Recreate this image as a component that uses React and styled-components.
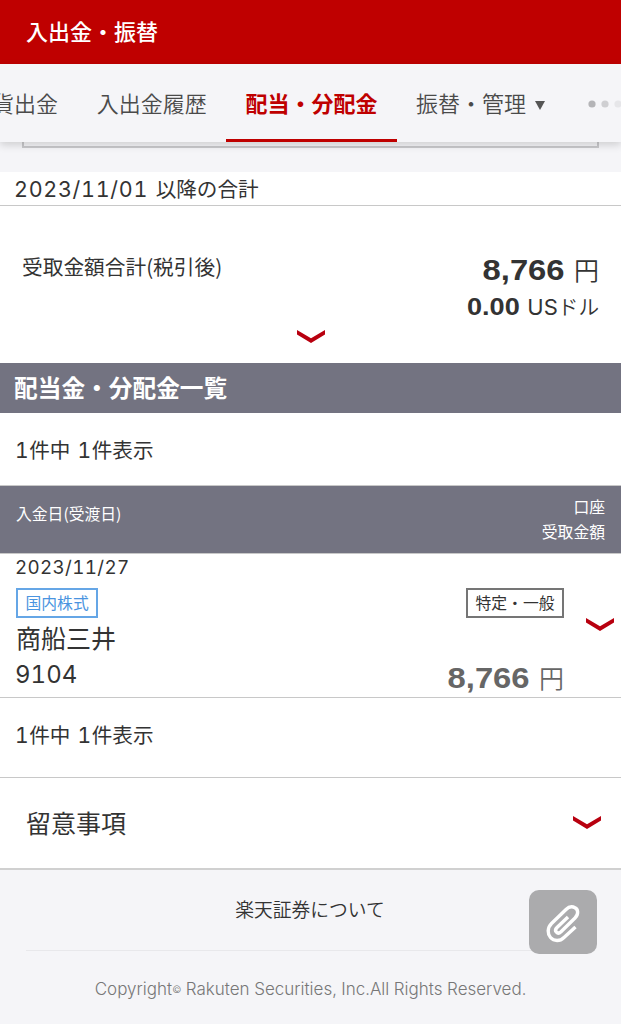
import React, { useState } from 'react';
import styled, { createGlobalStyle } from 'styled-components';

const GlobalStyle = createGlobalStyle`
  * {
    box-sizing: border-box;
  }

  body {
    margin: 0;
    background: #fff;
    color: #333;
    font-family: 'Noto Sans CJK JP', sans-serif;
    overflow: hidden;
  }
`;

const Page = styled.div`
  display: flex;
  flex-direction: column;
  width: 621px;
  height: 1024px;
  overflow: hidden;
`;

const Header = styled.header`
  flex-shrink: 0;
  height: 64px;
  padding-left: 26px;
  background: #bf0000;
  color: #fff;
  font-size: 22px;
  font-weight: 500;
  line-height: 61px;
`;

const TabBar = styled.nav`
  display: flex;
  flex-shrink: 0;
  height: 78px;
  background: #f5f5f8;
  box-shadow: 0 3px 8px rgba(0, 0, 0, 0.16);
  z-index: 1;
`;

const Tab = styled.button`
  flex-shrink: 0;
  height: 78px;
  margin: 0;
  padding: 0 19.3px 0 19.4px;
  border: none;
  border-bottom: 3px solid ${({ $active }) => ($active ? '#bf0000' : 'transparent')};
  background: none;
  color: ${({ $active }) => ($active ? '#bf0000' : '#4a4a4a')};
  font-family: inherit;
  font-size: 22px;
  font-weight: ${({ $active }) => ($active ? 700 : 350)};
  line-height: 76px;
  white-space: nowrap;
  cursor: pointer;

  &:first-child {
    margin-left: -27.4px;
  }
`;

const Caret = styled.svg`
  width: 10px;
  height: 10px;
  margin-left: 9px;
  vertical-align: 2px;
`;

const More = styled.svg`
  flex-shrink: 0;
  width: 40px;
  height: 10px;
  margin: 35px 0 0 23px;
`;

const FilterArea = styled.div`
  flex-shrink: 0;
  height: 30px;
  padding: 0 22px;
  background: #f5f5f8;
`;

const FilterBox = styled.div`
  height: 6px;
  border: 2px solid #c9c9cc;
  border-top: none;
`;

const Latin = styled.span`
  font-family: Inter, 'Noto Sans CJK JP', sans-serif;
  font-size: ${({ $size }) => $size}px;
  font-weight: ${({ $weight }) => $weight || 400};
  font-variant-numeric: tabular-nums;
  letter-spacing: ${({ $spacing }) => $spacing || 0}px;
  line-height: 1;
`;

/* wide bold figures, stretched towards the left of their right edge */
const Figure = styled.span`
  display: inline-block;
  font-family: 'Liberation Sans', Arial, sans-serif;
  font-size: ${({ $size }) => $size}px;
  font-weight: 700;
  line-height: 1;
  transform: scaleX(1.13);
  transform-origin: right center;
`;

const Since = styled.div`
  flex-shrink: 0;
  height: 34px;
  padding-left: 14px;
  border-bottom: 1px solid #c8c8c8;
  font-size: 20.6px;
  line-height: 33px;
  white-space: pre;
  word-spacing: 3px;
`;

const Summary = styled.section`
  display: flex;
  flex-direction: column;
  align-items: center;
  flex-shrink: 0;
  height: 157px;
  padding: 45px 22px 0;
`;

const SummaryRow = styled.div`
  display: flex;
  justify-content: space-between;
  width: 100%;
  height: 79px;
`;

const SummaryLabel = styled.div`
  font-size: 20.7px;
  line-height: 30px;
`;

const Amounts = styled.div`
  display: flex;
  flex-direction: column;
  align-items: flex-end;
`;

const Amount = styled.div`
  display: flex;
  align-items: baseline;
  gap: ${({ $gap }) => $gap}px;
  color: ${({ $muted }) => ($muted ? '#666' : '#333')};
  font-size: ${({ $size }) => $size}px;
  font-weight: 350;
  line-height: ${({ $line }) => $line || 37}px;
`;

const ToggleButton = styled.button`
  display: flex;
  padding: 0;
  border: none;
  background: none;
  cursor: pointer;
`;

const SectionTitle = styled.h2`
  flex-shrink: 0;
  height: 50px;
  margin: 0;
  padding-left: 14px;
  background: #737381;
  color: #fff;
  font-size: 23.7px;
  font-weight: 700;
  line-height: 48px;
`;

const Count = styled.div`
  flex-shrink: 0;
  height: ${({ $height }) => $height}px;
  padding-left: 15px;
  border-bottom: 1px solid #c8c8c8;
  font-size: 20.6px;
  line-height: ${({ $line }) => $line}px;
  white-space: pre;
  word-spacing: 2.5px;
`;

const TableHead = styled.div`
  display: flex;
  justify-content: space-between;
  flex-shrink: 0;
  height: 68px;
  padding: 8px 16px 0 16px;
  border-bottom: 1px solid #c8c8c8;
  background: #737381;
  color: #fff;
  font-size: 15.8px;
  line-height: 25px;
`;

const HeadLeft = styled.div`
  padding-top: 7px;
`;

const HeadRight = styled.div`
  text-align: right;
`;

const Item = styled.div`
  display: flex;
  flex-shrink: 0;
  height: 144px;
  padding-left: 16px;
  border-bottom: 1px solid #c8c8c8;
`;

const ItemInfo = styled.div`
  flex: 1;
  display: flex;
  flex-direction: column;
  align-items: flex-start;
`;

const ItemDate = styled.div`
  height: 34px;
  margin-left: -1px;
  line-height: 26px;
`;

const ItemName = styled.div`
  height: 38px;
  font-size: 25px;
  line-height: 39px;
`;

const ItemCode = styled.div`
  margin-left: -1px;
  line-height: 40px;
`;

const Tag = styled.span`
  height: 30px;
  padding: 0 7.5px;
  border: 2px solid ${({ $blue }) => ($blue ? '#65a6e6' : '#757575')};
  color: ${({ $blue }) => ($blue ? '#4a94e0' : '#333')};
  font-size: 15.8px;
  line-height: 25px;
`;

const ItemValues = styled.div`
  display: flex;
  flex-direction: column;
  align-items: flex-end;
  justify-content: space-between;
  padding: 34px 0 1px;
`;

const ItemToggle = styled.div`
  width: 57px;
  padding: 64px 0 0 22px;
`;

const Notes = styled.div`
  display: flex;
  justify-content: space-between;
  align-items: center;
  flex-shrink: 0;
  height: 92px;
  padding: 0 20px 2px 26px;
  border-bottom: 2px solid #d0d0d0;
  font-size: 25px;
`;

const Footer = styled.footer`
  position: relative;
  flex: 1;
  padding: 0 26px;
  background: #f5f5f8;
  text-align: center;
`;

const AboutLink = styled.div`
  height: 81px;
  padding-right: 1px;
  border-bottom: 1px solid #e8e8eb;
  font-size: 18.8px;
  font-weight: 350;
  line-height: 78px;
`;

const Copyright = styled.div`
  color: #777;
  line-height: 74px;
  white-space: nowrap;
`;

const Mark = styled.span`
  font-size: 10px;
  vertical-align: 2px;
`;

const ClipButton = styled.button`
  position: absolute;
  top: 20px;
  right: 24px;
  display: flex;
  width: 68px;
  height: 64px;
  padding: 0;
  border: none;
  border-radius: 10px;
  background: #ababad;
`;

const Chevron = () => (
  <svg width="28" height="13" viewBox="0 0 28 13">
    <path d="M0 0L14 8.3L28 0V4.6L14 13L0 4.6Z" fill="#b8000f" />
  </svg>
);

const tabs = ['貨出金', '入出金履歴', '配当・分配金', '振替・管理'];

const CountText = () => (
  <>
    <Latin $size={21} $spacing={0.6}>1</Latin>件中 <Latin $size={21} $spacing={0.6}>1</Latin>件表示
  </>
);

const App = () => {
  const [active, setActive] = useState(2);

  return (
    <Page>
      <GlobalStyle />
      <Header>入出金・振替</Header>
      <TabBar>
        {tabs.map((tab, index) => (
          <Tab key={tab} $active={index === active} onClick={() => setActive(index)}>
            {tab}
            {index === 3 && (
              <Caret viewBox="0 0 10 10">
                <path d="M0 1H10L5 10Z" fill="#555" />
              </Caret>
            )}
          </Tab>
        ))}
        <More viewBox="0 0 40 10">
          <circle cx="5" cy="5" r="3.6" fill="#b4b4b7" />
          <circle cx="18" cy="5" r="3.6" fill="#cfcfd2" />
          <circle cx="31" cy="5" r="3.6" fill="#e6e6e9" />
        </More>
      </TabBar>

      <FilterArea>
        <FilterBox />
      </FilterArea>

      <Since>
        <Latin $size={21.5} $spacing={0.7}>2023/11/01</Latin> 以降の合計
      </Since>

      <Summary>
        <SummaryRow>
          <SummaryLabel>受取金額合計(税引後)</SummaryLabel>
          <Amounts>
            <Amount $size={25} $gap={9}>
              <Figure $size={29}>8,766</Figure>円
            </Amount>
            <Amount $size={20.6} $gap={8}>
              <Figure $size={24}>0.00</Figure>
              <span>
                <Latin $size={22} $weight={400}>US</Latin>ドル
              </span>
            </Amount>
          </Amounts>
        </SummaryRow>
        <ToggleButton>
          <Chevron />
        </ToggleButton>
      </Summary>

      <SectionTitle>配当金・分配金一覧</SectionTitle>
      <Count $height={73} $line={72}>
        <CountText />
      </Count>

      <TableHead>
        <HeadLeft>入金日(受渡日)</HeadLeft>
        <HeadRight>
          口座
          <br />
          受取金額
        </HeadRight>
      </TableHead>

      <Item>
        <ItemInfo>
          <ItemDate>
            <Latin $size={18.8} $spacing={0.35}>2023/11/27</Latin>
          </ItemDate>
          <Tag $blue>国内株式</Tag>
          <ItemName>商船三井</ItemName>
          <ItemCode>
            <Latin $size={24}>9104</Latin>
          </ItemCode>
        </ItemInfo>
        <ItemValues>
          <Tag>特定・一般</Tag>
          <Amount $size={25} $gap={9} $line={38} $muted>
            <Figure $size={29}>8,766</Figure>円
          </Amount>
        </ItemValues>
        <ItemToggle>
          <ToggleButton>
            <Chevron />
          </ToggleButton>
        </ItemToggle>
      </Item>

      <Count $height={80} $line={73}>
        <CountText />
      </Count>

      <Notes>
        留意事項
        <ToggleButton>
          <Chevron />
        </ToggleButton>
      </Notes>

      <Footer>
        <AboutLink>楽天証券について</AboutLink>
        <Copyright>
          <Latin $size={17} $weight={300}>
            Copyright<Mark>©</Mark> Rakuten Securities, Inc.All Rights Reserved.
          </Latin>
        </Copyright>
        <ClipButton>
          <svg width="68" height="64" viewBox="0 0 68 64" fill="none" stroke="#fff" strokeWidth="3.4">
            <path d="M39 27L28 37.5C24.5 41 28.5 45 32 41.8L46 28C50 24 49 19 46 17.8C43 16 39.5 17 37 19.5L22.5 33.5C18 38 18.5 44 21.5 47.5C25 51.5 31 51.5 35 47.5L46.5 37" />
          </svg>
        </ClipButton>
      </Footer>
    </Page>
  );
};

export default App;
